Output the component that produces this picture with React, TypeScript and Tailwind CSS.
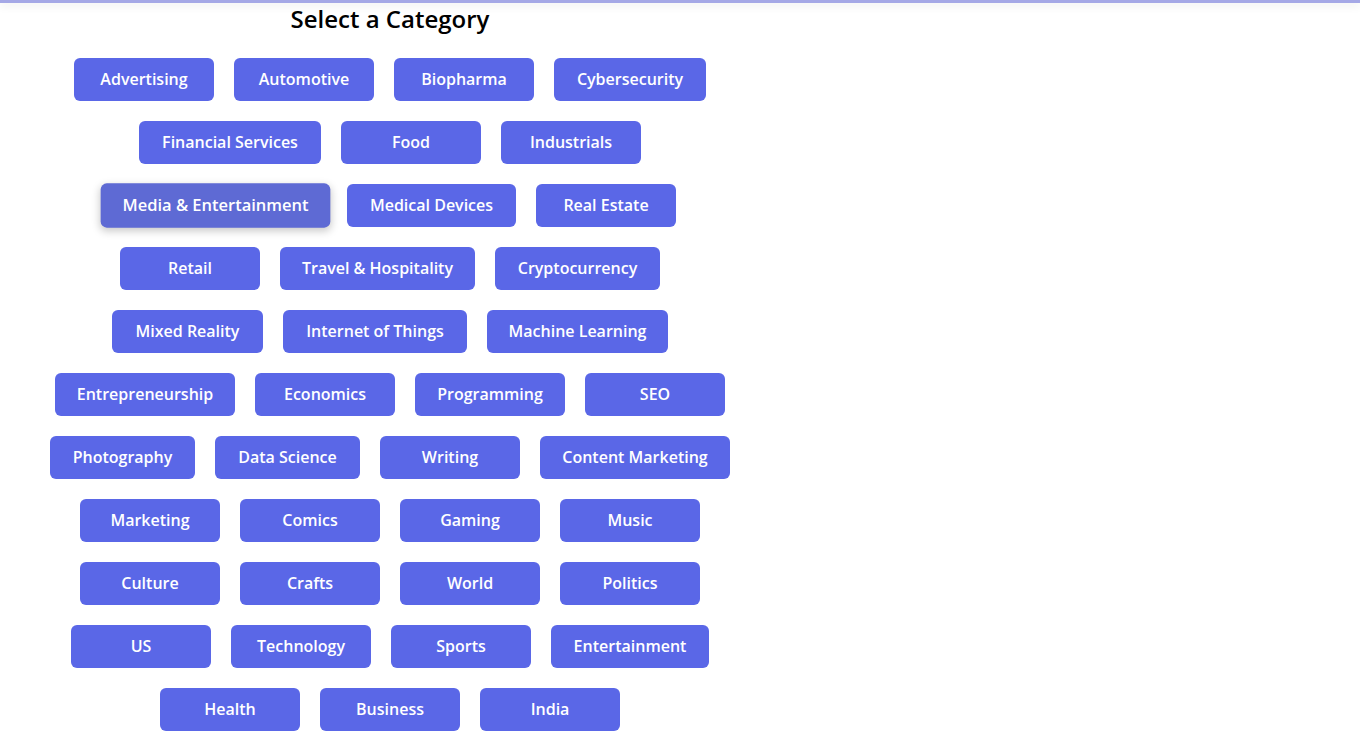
import React from "react";

type Cat = { label: string; w: string; active?: boolean };

const rows: Cat[][] = [
  [
    { label: "Advertising", w: "w-[140px]" },
    { label: "Automotive", w: "w-[140px]" },
    { label: "Biopharma", w: "w-[140px]" },
    { label: "Cybersecurity", w: "w-[152px]" },
  ],
  [
    { label: "Financial Services", w: "w-[182px]" },
    { label: "Food", w: "w-[140px]" },
    { label: "Industrials", w: "w-[140px]" },
  ],
  [
    { label: "Media & Entertainment", w: "w-[223px]", active: true },
    { label: "Medical Devices", w: "w-[169px]" },
    { label: "Real Estate", w: "w-[140px]" },
  ],
  [
    { label: "Retail", w: "w-[140px]" },
    { label: "Travel & Hospitality", w: "w-[195px]" },
    { label: "Cryptocurrency", w: "w-[165px]" },
  ],
  [
    { label: "Mixed Reality", w: "w-[151px]" },
    { label: "Internet of Things", w: "w-[184px]" },
    { label: "Machine Learning", w: "w-[181px]" },
  ],
  [
    { label: "Entrepreneurship", w: "w-[180px]" },
    { label: "Economics", w: "w-[140px]" },
    { label: "Programming", w: "w-[150px]" },
    { label: "SEO", w: "w-[140px]" },
  ],
  [
    { label: "Photography", w: "w-[145px]" },
    { label: "Data Science", w: "w-[145px]" },
    { label: "Writing", w: "w-[140px]" },
    { label: "Content Marketing", w: "w-[190px]" },
  ],
  [
    { label: "Marketing", w: "w-[140px]" },
    { label: "Comics", w: "w-[140px]" },
    { label: "Gaming", w: "w-[140px]" },
    { label: "Music", w: "w-[140px]" },
  ],
  [
    { label: "Culture", w: "w-[140px]" },
    { label: "Crafts", w: "w-[140px]" },
    { label: "World", w: "w-[140px]" },
    { label: "Politics", w: "w-[140px]" },
  ],
  [
    { label: "US", w: "w-[140px]" },
    { label: "Technology", w: "w-[140px]" },
    { label: "Sports", w: "w-[140px]" },
    { label: "Entertainment", w: "w-[158px]" },
  ],
  [
    { label: "Health", w: "w-[140px]" },
    { label: "Business", w: "w-[140px]" },
    { label: "India", w: "w-[140px]" },
  ],
];

export default function App() {
  return (
    <div
      className="min-h-screen bg-white"
      style={{ fontFamily: '"Open Sans", "Noto Sans", sans-serif' }}
    >
      <div className="h-[3px] bg-[#a5a8e6] shadow-[0_2px_10px_rgba(0,0,0,0.12)]" />
      <div className="w-[780px] flex flex-col items-center">
        <h2 className="text-[24px] leading-[32px] font-semibold text-black">
          Select a Category
        </h2>
        <div className="mt-[13px] flex flex-col">
          {rows.map((row, i) => (
            <div key={i} className="flex justify-center">
              {row.map((c) => (
                <button
                  key={c.label}
                  className={`${c.w} h-[43px] m-[10px] pb-[2px] rounded-[6px] text-white text-[16px] font-semibold whitespace-nowrap flex items-center justify-center ${
                    c.active
                      ? "bg-[#5e6ad4] scale-[1.03] shadow-[0_3px_8px_rgba(0,0,0,0.22)]"
                      : "bg-[#5a67e7]"
                  }`}
                >
                  {c.label}
                </button>
              ))}
            </div>
          ))}
        </div>
      </div>
    </div>
  );
}
